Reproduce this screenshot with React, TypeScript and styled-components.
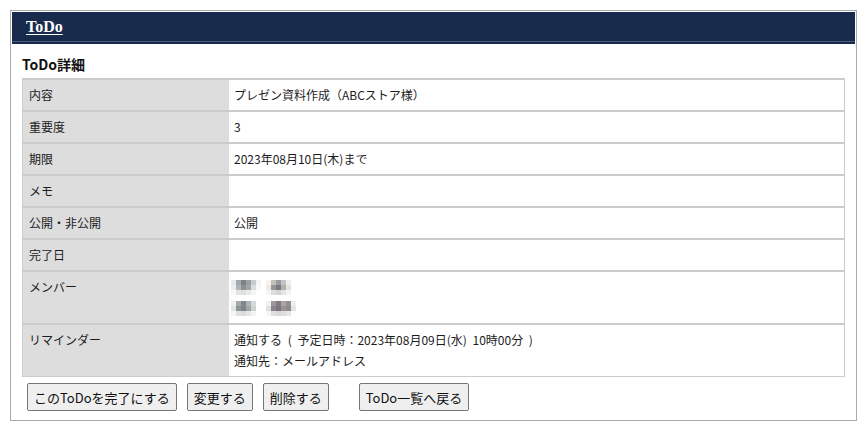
import { Fragment } from 'react';
import styled, { createGlobalStyle } from 'styled-components';

const GlobalStyle = createGlobalStyle`
  body {
    margin: 0;
    padding: 10px 8px 0 10px;
    background: #ffffff;
    font-family: 'Noto Sans CJK JP', 'Noto Sans', sans-serif;
    color: #1c1c1c;
  }
`;

const Frame = styled.div`
  width: 847px;
  height: 411px;
  border: 1px solid #aaaaaa;
  padding: 1px;
  box-sizing: border-box;
  display: flex;
  flex-direction: column;
`;

const Header = styled.header`
  height: 29px;
  background: #192b4d;
  border-bottom: 1px solid #4b5b7c;
  box-shadow: 0 2px 0 #192b4d;
  margin-bottom: 2px;
  padding-left: 14px;
  display: flex;
  align-items: center;
`;

const HeaderLink = styled.a`
  font-family: 'Liberation Serif', 'DejaVu Serif', serif;
  font-weight: 700;
  font-size: 16px;
  color: #ffffff;
  text-decoration: underline;
  text-underline-offset: 2px;
  margin-top: 1px;
`;

const Body = styled.div`
  padding: 11px 10px 0 10px;
  display: flex;
  flex-direction: column;
`;

const Title = styled.h2`
  margin: 0 0 4px;
  font-size: 14px;
  line-height: 19px;
  font-weight: 700;
  color: #111111;
`;

const Table = styled.div`
  display: grid;
  grid-template-columns: 206px 1fr;
  row-gap: 2px;
  background: #cccccc;
  border: 1px solid #cccccc;
  border-top-width: 2px;
`;

const Label = styled.div`
  background: #dddddd;
  padding: 7px 6px;
  font-size: 12px;
  line-height: 16px;
  min-height: 16px;
`;

const Value = styled.div`
  background: #ffffff;
  padding: 7px 5px;
  font-size: 12px;
  line-height: 16px;
  min-height: 16px;
  display: flex;
  flex-direction: column;
  gap: 5px;
`;

const Spaced = styled.span`
  word-spacing: 3px;
`;

const MemberLine = styled.div`
  display: flex;
  gap: 5px;
  height: 16px;
  align-items: center;
  margin-left: -3px;
`;

const Mosaic = styled.div`
  display: grid;
  grid-template-columns: repeat(6, 5px);
  grid-template-rows: repeat(3, 5px);
`;

const Tile = styled.span`
  display: block;
`;

const ButtonRow = styled.div`
  display: flex;
  gap: 10px;
  margin-top: 6px;
  padding-left: 5px;
`;

const Button = styled.button<{ $gapBefore?: boolean }>`
  height: 28px;
  padding: 0 6px;
  background: #efefef;
  border: 1px solid #767676;
  border-radius: 2px;
  font-family: 'Noto Sans CJK JP', 'Noto Sans', sans-serif;
  font-size: 13px;
  color: #111111;
  margin-left: ${({ $gapBefore }) => ($gapBefore ? '20px' : '0')};
`;

const mosaics: string[][] = [
  ['#e6e9ea', '#a3aaad', '#7c8487', '#98a0a2', '#c8cccd', '#f3f4f4', '#eceeef', '#b0b6b8', '#8b9294', '#a0a6a8', '#d8dcdc', '#fafafa', '#f6f7f7', '#e2e5e5', '#dde0e0', '#e8eaea', '#f4f5f5', '#ffffff'],
  ['#f8f2ea', '#c4bfb9', '#9a9aa0', '#c2c2c2', '#eeeeee', '#ffffff', '#efebe6', '#96959a', '#7a7c80', '#b2afac', '#e2e2e2', '#ffffff', '#f4f4f4', '#dedede', '#d2d2d2', '#e4e4e4', '#f4f4f4', '#ffffff'],
  ['#eeeeee', '#a6aaad', '#80878c', '#adb2b4', '#d6d8d9', '#ffffff', '#e4e6e6', '#8e9498', '#7f858a', '#a0a5a8', '#cdd0d1', '#ffffff', '#f5f5f5', '#dfe0e0', '#d9dbdb', '#e6e6e6', '#f4f4f4', '#ffffff'],
  ['#f2efec', '#9c979a', '#807a84', '#aaa3a0', '#958f92', '#eeeeee', '#e4e0de', '#8a858c', '#7b7580', '#9a9390', '#8e898b', '#e4e4e4', '#f6f6f6', '#e0e0e0', '#d8d8d8', '#dedede', '#e6e6e6', '#ffffff'],
];

function Pixelated({ tiles }: { tiles: string[] }) {
  return (
    <Mosaic>
      {tiles.map((c, i) => (
        <Tile key={i} style={{ background: c }} />
      ))}
    </Mosaic>
  );
}

const rows: { label: string; value: string }[] = [
  { label: '内容', value: 'プレゼン資料作成（ABCストア様）' },
  { label: '重要度', value: '3' },
  { label: '期限', value: '2023年08月10日(木)まで' },
  { label: 'メモ', value: '' },
  { label: '公開・非公開', value: '公開' },
  { label: '完了日', value: '' },
];

export default function App() {
  return (
    <>
      <GlobalStyle />
      <Frame>
        <Header>
          <HeaderLink href="#">ToDo</HeaderLink>
        </Header>
        <Body>
          <Title>ToDo詳細</Title>
          <Table>
            {rows.map((row) => (
              <Fragment key={row.label}>
                <Label>{row.label}</Label>
                <Value>
                  <span>{row.value}</span>
                </Value>
              </Fragment>
            ))}
            <Label>メンバー</Label>
            <Value>
              <MemberLine>
                <Pixelated tiles={mosaics[0]} />
                <Pixelated tiles={mosaics[1]} />
              </MemberLine>
              <MemberLine>
                <Pixelated tiles={mosaics[2]} />
                <Pixelated tiles={mosaics[3]} />
              </MemberLine>
            </Value>
            <Label>リマインダー</Label>
            <Value>
              <Spaced>通知する ( 予定日時：2023年08月09日(水) 10時00分 )</Spaced>
              <span>通知先：メールアドレス</span>
            </Value>
          </Table>
          <ButtonRow>
            <Button type="button">このToDoを完了にする</Button>
            <Button type="button">変更する</Button>
            <Button type="button">削除する</Button>
            <Button type="button" $gapBefore>
              ToDo一覧へ戻る
            </Button>
          </ButtonRow>
        </Body>
      </Frame>
    </>
  );
}
